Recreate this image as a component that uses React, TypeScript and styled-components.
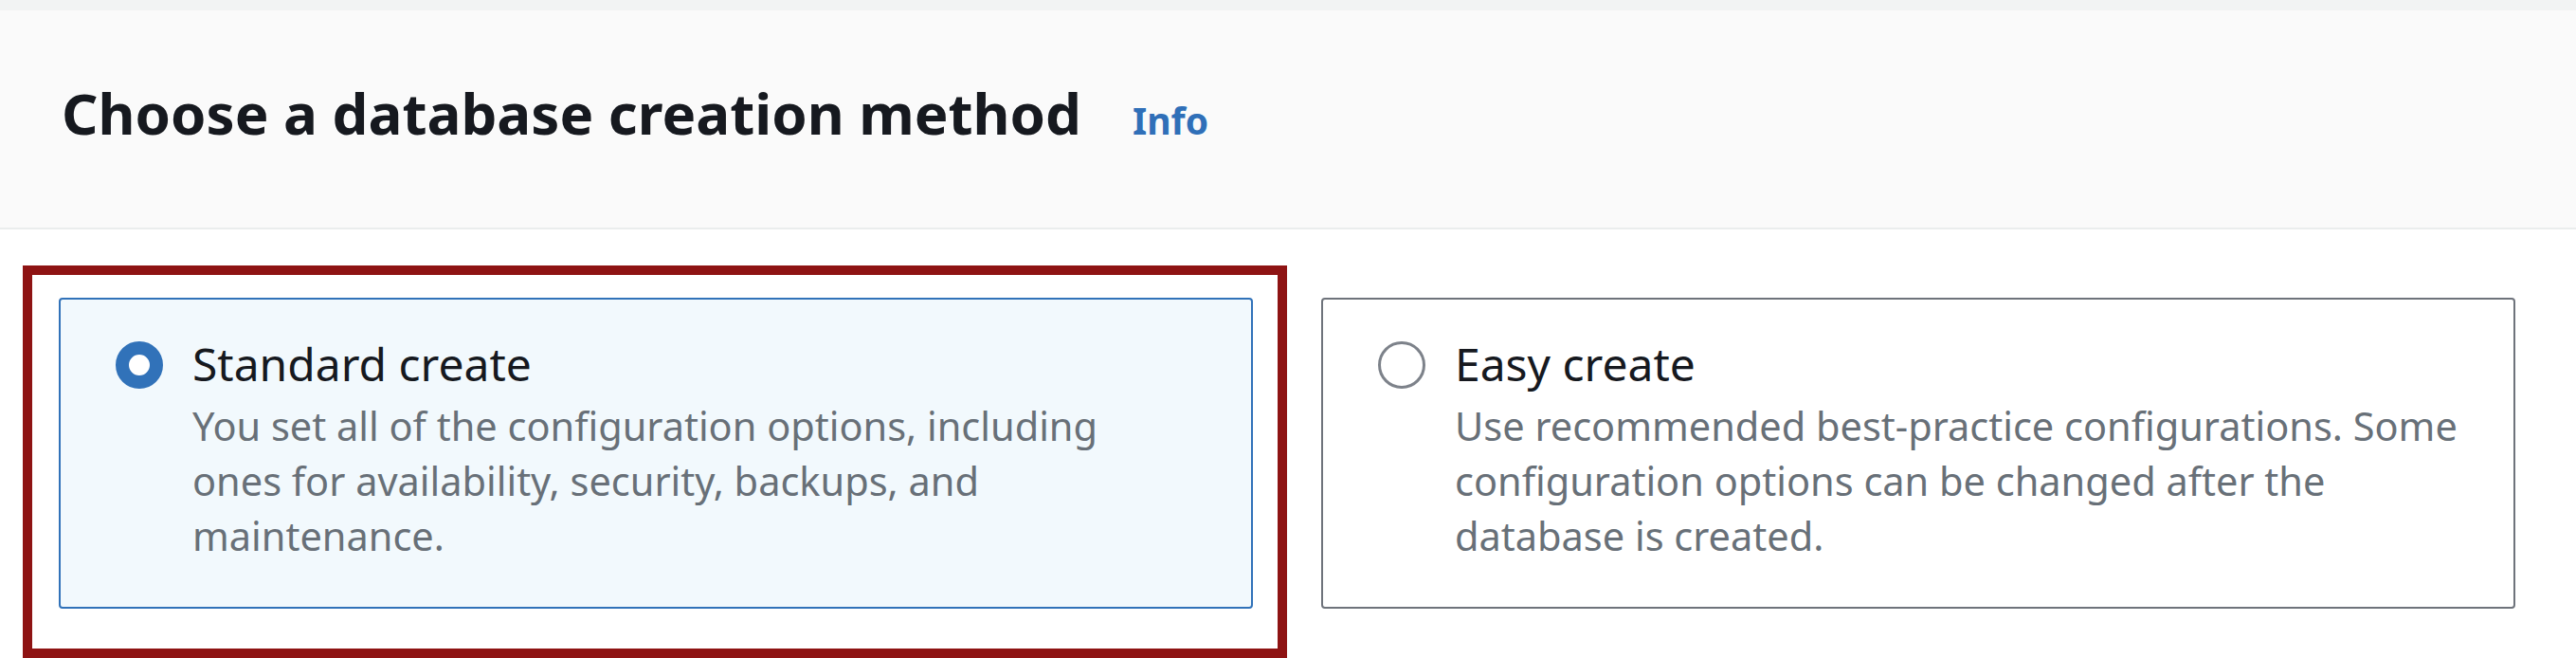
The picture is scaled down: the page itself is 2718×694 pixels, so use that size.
import React from "react";
import styled, { createGlobalStyle } from "styled-components";

const GlobalStyle = createGlobalStyle`
  html, body {
    margin: 0;
    padding: 0;
    background: #ffffff;
    font-family: "Noto Sans", "Open Sans", Arial, sans-serif;
    overflow: hidden;
  }
  * { box-sizing: border-box; }
`;

const Page = styled.div`
  width: 2718px;
  height: 694px;
  display: flex;
  flex-direction: column;
  background: #ffffff;
`;

const TopStrip = styled.div`
  height: 11px;
  background: #f2f3f3;
`;

const Header = styled.header`
  height: 231px;
  background: #fafafa;
  border-bottom: 2px solid #eaeded;
  padding: 68px 0 0 65px;
  display: flex;
  align-items: baseline;
  gap: 54px;
`;

const Title = styled.h2`
  margin: 0;
  font-size: 60px;
  line-height: 80px;
  font-weight: 700;
  color: #16191f;
`;

const InfoLink = styled.a`
  font-size: 39px;
  line-height: 80px;
  font-weight: 700;
  color: #2f6fb8;
  text-decoration: none;
  cursor: pointer;
`;

const Section = styled.section`
  padding: 72px 64px 0 62px;
`;

const CardGrid = styled.div`
  position: relative;
  display: grid;
  grid-template-columns: 1fr 1fr;
  gap: 72px;
`;

const Card = styled.label<{ $selected?: boolean }>`
  display: flex;
  align-items: flex-start;
  gap: 31px;
  height: 328px;
  padding: 35px 0 0 58px;
  border: 2px solid ${(p) => (p.$selected ? "#3172b9" : "#6e737b")};
  border-radius: 4px;
  background: ${(p) => (p.$selected ? "#f2f9fd" : "#ffffff")};
  cursor: pointer;
`;

const Radio = styled.span<{ $checked?: boolean }>`
  flex: none;
  width: 50px;
  height: 50px;
  margin-top: 9px;
  border-radius: 50%;
  border: ${(p) => (p.$checked ? "14px solid #3172b9" : "3px solid #7d828a")};
  background: #ffffff;
`;

const Text = styled.div`
  display: flex;
  flex-direction: column;
  width: 1058.8px;
`;

const Label = styled.span`
  font-size: 48px;
  line-height: 66px;
  color: #16191f;
  font-weight: 400;
`;

const Description = styled.span`
  margin-top: 3px;
  font-size: 41.5px;
  line-height: 58px;
  color: #687078;
`;

const Highlight = styled.div`
  position: absolute;
  left: -38px;
  top: -34px;
  width: 1334px;
  height: 414px;
  border: 10px solid #8e1313;
  pointer-events: none;
`;

const options = [
  {
    id: "standard",
    label: "Standard create",
    description:
      "You set all of the configuration options, including ones for availability, security, backups, and maintenance.",
  },
  {
    id: "easy",
    label: "Easy create",
    description:
      "Use recommended best-practice configurations. Some configuration options can be changed after the database is created.",
  },
];

export default function App() {
  const [selected, setSelected] = React.useState("standard");
  return (
    <>
      <GlobalStyle />
      <Page>
        <TopStrip />
        <Header>
          <Title>Choose a database creation method</Title>
          <InfoLink>Info</InfoLink>
        </Header>
        <Section>
          <CardGrid>
            {options.map((o) => (
              <Card
                key={o.id}
                $selected={selected === o.id}
                onClick={() => setSelected(o.id)}
              >
                <Radio $checked={selected === o.id} />
                <Text>
                  <Label>{o.label}</Label>
                  <Description>{o.description}</Description>
                </Text>
              </Card>
            ))}
            <Highlight />
          </CardGrid>
        </Section>
      </Page>
    </>
  );
}
